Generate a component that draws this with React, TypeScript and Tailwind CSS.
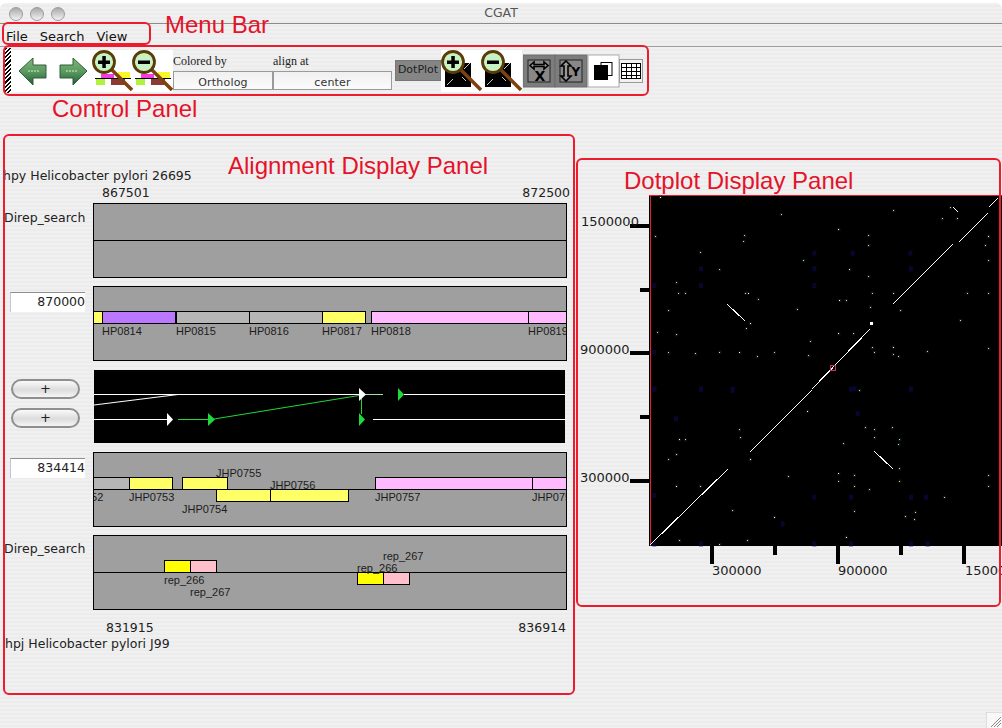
import React from "react";

const UI = "font-['DejaVu_Sans',sans-serif]";
const stripes =
  "bg-[repeating-linear-gradient(to_bottom,#f0f0f0_0px,#f0f0f0_2px,#ececec_2px,#ececec_4px)]";

type Gene = { l: number; r: number; t: number; c: string };
type Lab = { x: number; y: number; s: string };

function Track({ genes = [], labels = [], line, ny }: { genes?: Gene[]; labels?: Lab[]; line: number; ny: number }) {
  // x and y values are page coordinates of the figure; the track starts at x=93, y=ny
  return (
    <div className="relative h-[75px] w-[474px] overflow-hidden border border-black bg-[#9f9f9f] box-border">
      <div className="absolute inset-x-0 h-px bg-black" style={{ top: line - ny - 1 }} />
      {genes.map((g, i) => (
        <div
          key={i}
          className="absolute h-[13px] border border-black box-border"
          style={{ left: g.l - 94, width: g.r - g.l + 1, top: g.t - ny - 1, background: g.c }}
        />
      ))}
      {labels.map((b, i) => (
        <span
          key={i}
          className="absolute whitespace-nowrap text-[11px] leading-[13px] text-[#1c1c1c] font-['Liberation_Sans',sans-serif]"
          style={{ left: b.x - 94, top: b.y - ny - 7 }}
        >
          {b.s}
        </span>
      ))}
    </div>
  );
}

function Lens({ x, y, plus }: { x: number; y: number; plus: boolean }) {
  return (
    <g>
      <line x1={x + 7} y1={y + 7} x2={x + 28} y2={y + 28} stroke="#7a4310" strokeWidth="3.5" />
      <circle cx={x} cy={y} r="10.5" fill="#c9f2c4" stroke="#5a3c08" strokeWidth="2.8" />
      <rect x={x - 6} y={y - 1.5} width="12" height="3.5" fill="#000" />
      {plus && <rect x={x - 1.7} y={y - 6} width="3.5" height="12" fill="#000" />}
    </g>
  );
}

function MapZoom({ ox, plus }: { ox: number; plus: boolean }) {
  return (
    <g>
      <rect x={ox + 101} y="74" width="13" height="4" fill="#f23ce0" />
      <rect x={ox + 118} y="72" width="12" height="6" fill="#f7f72c" />
      <rect x={ox + 95} y="78" width="36" height="1" fill="#000" />
      <rect x={ox + 96} y="79" width="9" height="6" fill="#b0f23c" />
      <rect x={ox + 111} y="79" width="14" height="6" fill="#8a3c34" />
      <Lens x={ox + 104} y={62} plus={plus} />
    </g>
  );
}

function PlotZoom({ ox, plus }: { ox: number; plus: boolean }) {
  return (
    <g>
      <rect x={ox + 445} y="63" width="26" height="24" fill="#000" />
      <line x1={ox + 447} y1="85" x2={ox + 453} y2="79" stroke="#fff" strokeWidth="0.8" />
      <line x1={ox + 462} y1="77" x2={ox + 466} y2="81" stroke="#fff" strokeWidth="0.8" />
      <line x1={ox + 464} y1="69" x2={ox + 470} y2="63" stroke="#fff" strokeWidth="0.8" />
      <Lens x={ox + 453} y={62} plus={plus} />
    </g>
  );
}

function Toolbar() {
  return (
    <div className="flex h-[46px] items-start pl-[5px]">
      <div className="mt-px h-[45px] w-[6px] bg-[repeating-linear-gradient(135deg,#000_0px,#000_1.5px,#fff_1.5px,#fff_3px)]" />
      <svg width="162" height="42" viewBox="11 50 162 42" className="mt-[3px] block bg-white">
        <defs>
          <linearGradient id="ga" x1="0" y1="0" x2="0" y2="1">
            <stop offset="0" stopColor="#7fb87c" />
            <stop offset="0.5" stopColor="#5c9a60" />
            <stop offset="1" stopColor="#235c33" />
          </linearGradient>
        </defs>
        <polygon points="19,71 33,58 33,65 46,65 46,78 33,78 33,85" fill="url(#ga)" stroke="#2f5f38" strokeWidth="1" />
        <line x1="28" y1="71" x2="40" y2="71" stroke="#a9d6a6" strokeWidth="1.5" strokeDasharray="2 1" />
        <polygon points="87,71 73,58 73,65 60,65 60,78 73,78 73,85" fill="url(#ga)" stroke="#2f5f38" strokeWidth="1" />
        <line x1="66" y1="71" x2="78" y2="71" stroke="#a9d6a6" strokeWidth="1.5" strokeDasharray="2 1" />
        <MapZoom ox={0} plus />
        <MapZoom ox={40} plus={false} />
      </svg>
      <div className="flex flex-col">
        <div className="flex h-[24px] items-center pt-[3px] text-[12px] text-[#222] font-['Liberation_Serif',serif]">
          <span className="w-[100px]">Colored by</span>
          <span>align at</span>
        </div>
        <div className={`flex ${UI} text-[11px] tracking-[0.2px] text-[#333]`}>
          <div className="flex h-[19px] w-[100px] items-center justify-center border border-[#9a9a9a] bg-[linear-gradient(#f0f0f0,#fbfbfb)] pt-[5px]">Ortholog</div>
          <div className="flex h-[19px] w-[119px] items-center justify-center border border-[#9a9a9a] bg-[linear-gradient(#f0f0f0,#fbfbfb)] pt-[5px]">center</div>
        </div>
      </div>
      <div className={`mt-[13px] ml-[3px] flex h-[21px] w-[46px] items-center justify-center border border-[#777] bg-[#858585] text-[11px] text-[#222] ${UI}`}>DotPlot</div>
      <svg width="81" height="42" viewBox="441 50 81 42" className="mt-[3px] block bg-white">
        <PlotZoom ox={0} plus />
        <PlotZoom ox={40} plus={false} />
      </svg>
      <svg width="122" height="36" viewBox="522 54 122 36" className="mt-[7px] ml-px block">
        <rect x="522" y="55" width="32" height="32" fill="#7d7d7d" stroke="#6c6c6c" />
        <rect x="527" y="60" width="22" height="22" fill="#888" stroke="#222" />
        <path d="M529 65.5 L533 62 L533 64.5 L543 64.5 L543 62 L547 65.5 L543 69 L543 66.5 L533 66.5 L533 69 Z" fill="#999" stroke="#000" strokeWidth="1.6" />
        <text x="533.5" y="81" fontSize="14" fontWeight="bold" fontFamily="DejaVu Sans, sans-serif" fill="#000">X</text>
        <rect x="554" y="55" width="32" height="32" fill="#7d7d7d" stroke="#6c6c6c" />
        <rect x="559" y="60" width="22" height="22" fill="#888" stroke="#222" />
        <path d="M565 61 L570 66 L567 66 L567 76 L570 76 L565 81 L560 76 L563 76 L563 66 L560 66 Z" fill="#999" stroke="#000" strokeWidth="1.6" />
        <text x="570.5" y="76" fontSize="12" fontWeight="bold" fontFamily="DejaVu Sans, sans-serif" fill="#000">Y</text>
        <rect x="587" y="55" width="31" height="32" fill="#fff" stroke="#aaa" />
        <rect x="600" y="62.5" width="11" height="13" fill="#fff" stroke="#000" />
        <rect x="593" y="65" width="14" height="15" fill="#000" />
        <rect x="618.5" y="59.5" width="23" height="23" fill="#f2f2f2" stroke="#999" />
        <rect x="620.5" y="63.5" width="19" height="15" fill="#fff" stroke="#000" />
        <path d="M620 67.5H640M620 71.5H640M620 75.5H640M625.5 63V79M630.5 63V79M635.5 63V79" stroke="#000" strokeWidth="1" />
      </svg>
    </div>
  );
}

function Pill() {
  return (
    <div className="flex h-[20px] w-[69px] items-center justify-center rounded-full border-2 border-[#8f8f8f] bg-[linear-gradient(#fafafa,#dcdcdc_55%,#f5f5f5)] text-[13px] text-[#222]">+</div>
  );
}

function Num({ v }: { v: string }) {
  return (
    <div className="flex h-[20px] w-[75px] items-center justify-end border-t border-l border-t-[#8f8f8f] border-l-[#b9c7d8] bg-white text-[12.5px] text-[#222]">{v}</div>
  );
}

function Connections() {
  const W = "#ffffff";
  const G = "#1fd93a";
  return (
    <svg width="471" height="73" viewBox="94 370 471 73" className="block bg-black">
      <line x1="94" y1="394.5" x2="360" y2="394.5" stroke={W} />
      <line x1="94" y1="405" x2="178" y2="394.5" stroke={W} />
      <line x1="94" y1="419.5" x2="168" y2="419.5" stroke={W} />
      <polygon points="167,413 173,419.5 167,426" fill={W} />
      <line x1="178" y1="419.5" x2="210" y2="419.5" stroke={G} />
      <polygon points="208,413 215,419.5 208,426" fill={G} />
      <line x1="214" y1="419" x2="362" y2="395" stroke={G} />
      <line x1="362" y1="394.5" x2="383" y2="394.5" stroke="#9fe0a8" />
      <line x1="361.5" y1="395" x2="361.5" y2="414" stroke={G} />
      <polygon points="359,413 365,419.5 359,426" fill={G} />
      <polygon points="359,388 366,394.5 359,401" fill={W} />
      <polygon points="398,388 404,394.5 398,401" fill={G} />
      <line x1="404" y1="394.5" x2="565" y2="394.5" stroke={W} />
      <line x1="373" y1="419.5" x2="565" y2="419.5" stroke={W} />
    </svg>
  );
}

const z7 = (p: number[][]) => p.map(([x, y]) => [570 + x / 3, 150 + y / 3]);
const z8 = (p: number[][]) => p.map(([x, y]) => [570 + x / 3, 380 + y / 3]);

const pale = [
  ...z7([[270,140],[632,192],[970,180],[1115,205],[1160,205],[1140,172],[805,237],[895,255],[895,285],[523,255],[520,273],[255,258],[1255,258],[1245,285],[390,305],[700,330],[1255,330],[448,358],[838,358],[895,378],[318,397],[325,428],[345,428],[525,428],[533,428],[563,446],[905,428],[970,428],[1190,428],[1255,428],[808,450],[827,450],[295,480],[680,476],[900,470],[990,480],[540,520],[527,535],[905,518],[1170,510],[262,545],[318,553],[805,550],[850,550],[720,572],[295,607],[375,610],[448,605],[508,607],[560,618],[612,607],[715,616],[905,592],[912,606],[968,590],[968,612],[985,618],[1070,603],[1255,595]]),
  ...z8([[868,30],[712,92],[885,142],[913,148],[965,142],[508,148],[510,172],[327,178],[345,178],[913,172],[988,178],[985,192],[820,190],[540,237],[295,237],[318,222],[988,265],[988,302],[653,288],[805,280],[805,302],[852,285],[852,317],[1255,285],[1255,317],[318,317],[390,317],[897,328],[1122,350],[487,390],[852,392],[612,410],[1005,408],[1035,395],[1032,417],[327,480],[532,480],[827,470],[448,492]]),
];
const blue = [
  ...z7([[250,405],[390,405],[730,405],[730,308],[845,308],[1018,308],[250,605],[390,355],[730,355],[1020,355],[250,716],[390,716],[485,716],[840,716],[1020,716]]),
  ...z8([[250,25],[390,25],[485,30],[850,25],[1020,25],[860,100],[315,115],[250,345],[730,350],[840,350],[1020,350],[1065,350],[1020,490],[840,490],[730,490],[635,430],[390,490],[250,490],[1070,490]]),
];

function DotPlot() {
  const segs = [
    [650,545,728,469],[750,452,812,390],[812,389,870,329],[893,304,953,244],[959,242,988,213],[989,207,998,198],
    [727,304,745,321],[874,451,893,469],[953,207,958,212],
  ];
  const yt = [[226,630],[290,640],[353,630],[417,640],[481,630]];
  const xt = [[712,564],[775,555],[838,564],[901,555],[964,564]];
  const tx = "DejaVu Sans, sans-serif";
  return (
    <svg width="426" height="400" viewBox="576 190 426 400" className="block">
      <rect x="649" y="196" width="353" height="350" fill="#000" />
      <line x1="650.5" y1="196" x2="650.5" y2="546" stroke="#e0202c" />
      <line x1="649" y1="195.5" x2="1002" y2="195.5" stroke="#e0202c" />
      {blue.map(([x, y], i) => <rect key={i} x={x - 1} y={y - 2} width="4" height="5" fill="#06062e" />)}
      {pale.map(([x, y], i) => <rect key={i} x={x - 1} y={y - 1} width="3" height="3" fill="#101810" />)}
      {pale.map(([x, y], i) => <rect key={i} x={Math.round(x)} y={Math.round(y)} width="1" height="1" fill={i % 6 === 0 ? "#ffffff" : i % 5 === 0 ? "#8ff09f" : "#c8d8c8"} />)}
      {segs.map(([a, b, c, d], i) => <line key={i} x1={a} y1={b} x2={c} y2={d} stroke="#fff" strokeWidth="1" shapeRendering="crispEdges" />)}
      <rect x="870" y="322" width="3" height="3" fill="#fff" />
      <rect x="830.5" y="365.5" width="5" height="5" fill="none" stroke="#d0305a" />
      {yt.map(([y, x], i) => <rect key={i} x={x} y={y - 2} width={649 - x} height="4" fill="#000" />)}
      {xt.map(([x, y], i) => <rect key={i} x={x - 2} y="546" width="4" height={y - 546} fill="#000" />)}
      <g fontFamily={tx} fontSize="13" fill="#1c1c1c">
        <text x="581" y="226">1500000</text>
        <text x="580" y="354">900000</text>
        <text x="580" y="482">300000</text>
        <text x="712" y="575">300000</text>
        <text x="838" y="575">900000</text>
        <text x="965" y="575">1500000</text>
      </g>
    </svg>
  );
}

function Outline({ cls }: { cls: string }) {
  return <div className={`pointer-events-none absolute rounded-[6px] border-2 border-[#ec1c2e] ${cls}`} />;
}
function Note({ cls, children }: { cls: string; children: React.ReactNode }) {
  return (
    <span className={`pointer-events-none absolute whitespace-nowrap text-[24px] leading-[28px] text-[#e5122a] font-['Liberation_Sans',sans-serif] ${cls}`}>
      {children}
    </span>
  );
}

export default function App() {
  const purple = "#bb77ff", gray = "#b6b6b6", ly = "#ffff66", pk = "#ffb9ff";
  const light = "h-[14px] w-[14px] rounded-full border border-[#9c9c9c] bg-[linear-gradient(#a9a9a9,#f2f2f2)]";
  return (
    <div className={`relative h-[728px] w-[1002px] overflow-hidden bg-white pt-[3px] ${UI}`}>
      <div className={`flex h-[725px] flex-col rounded-t-[6px] ${stripes}`}>
        <div className="relative flex h-[21px] shrink-0 items-center justify-center border-b border-[#8c8c8c] text-[12.5px] text-[#555]">
          <div className="absolute left-[9px] top-[4px] flex gap-[7px]">
            <div className={light} />
            <div className={light} />
            <div className={light} />
          </div>
          CGAT
        </div>
        <div className="flex h-[23px] shrink-0 items-center gap-[12px] border-b border-[#a0a0a0] pl-[6px] pt-[3px] text-[13px] text-[#111]">
          <span>File</span>
          <span>Search</span>
          <span>View</span>
        </div>
        <Toolbar />
        <div className="flex flex-1">
          <div className="w-[576px] shrink-0 pt-[75px] text-[12.5px] text-[#222]">
            <div className="h-[15px] pl-[3px] leading-[15px]">hpy Helicobacter pylori 26695</div>
            <div className="mt-[2px] flex h-[15px] w-[570px] justify-between pl-[102px] leading-[15px]">
              <span>867501</span>
              <span>872500</span>
            </div>
            <div className="mt-[3px] flex">
              <div className="w-[93px] pt-[6px] pl-[4px]">Direp_search</div>
              <Track line={240} ny={203} />
            </div>
            <div className="mt-[8px] flex">
              <div className="w-[93px] pt-[6px] pl-[10px]"><Num v="870000" /></div>
              <Track
                line={323}
                ny={286}
                genes={[
                  { l: 93, r: 102, t: 311, c: ly },
                  { l: 102, r: 175, t: 311, c: purple },
                  { l: 176, r: 249, t: 311, c: gray },
                  { l: 249, r: 322, t: 311, c: gray },
                  { l: 322, r: 365, t: 311, c: ly },
                  { l: 371, r: 528, t: 311, c: pk },
                  { l: 528, r: 570, t: 311, c: pk },
                ]}
                labels={[
                  { x: 102, y: 331, s: "HP0814" },
                  { x: 176, y: 331, s: "HP0815" },
                  { x: 249, y: 331, s: "HP0816" },
                  { x: 322, y: 331, s: "HP0817" },
                  { x: 371, y: 331, s: "HP0818" },
                  { x: 528, y: 331, s: "HP0819" },
                ]}
              />
            </div>
            <div className="mt-[9px] flex">
              <div className="flex w-[94px] flex-col gap-[9px] pt-[9px] pl-[11px]">
                <Pill />
                <Pill />
              </div>
              <Connections />
            </div>
            <div className="mt-[9px] flex">
              <div className="w-[93px] pt-[6px] pl-[10px]"><Num v="834414" /></div>
              <Track
                line={489}
                ny={452}
                genes={[
                  { l: 93, r: 129, t: 477, c: gray },
                  { l: 129, r: 172, t: 477, c: ly },
                  { l: 182, r: 227, t: 477, c: ly },
                  { l: 375, r: 532, t: 477, c: pk },
                  { l: 532, r: 570, t: 477, c: pk },
                  { l: 216, r: 270, t: 489, c: ly },
                  { l: 270, r: 348, t: 489, c: ly },
                ]}
                labels={[
                  { x: 58, y: 497, s: "JHP0752" },
                  { x: 129, y: 497, s: "JHP0753" },
                  { x: 182, y: 509, s: "JHP0754" },
                  { x: 216, y: 473, s: "JHP0755" },
                  { x: 270, y: 485, s: "JHP0756" },
                  { x: 375, y: 497, s: "JHP0757" },
                  { x: 532, y: 497, s: "JHP0758" },
                ]}
              />
            </div>
            <div className="mt-[8px] flex">
              <div className="w-[93px] pt-[5px] pl-[4px]">Direp_search</div>
              <Track
                line={572}
                ny={535}
                genes={[
                  { l: 164, r: 190, t: 560, c: "#ffff00" },
                  { l: 190, r: 216, t: 560, c: "#ffc0cb" },
                  { l: 357, r: 383, t: 572, c: "#ffff00" },
                  { l: 383, r: 409, t: 572, c: "#ffc0cb" },
                ]}
                labels={[
                  { x: 164, y: 580, s: "rep_266" },
                  { x: 190, y: 592, s: "rep_267" },
                  { x: 357, y: 568, s: "rep_266" },
                  { x: 383, y: 556, s: "rep_267" },
                ]}
              />
            </div>
            <div className="mt-[10px] flex h-[15px] w-[566px] justify-between pl-[106px] leading-[15px]">
              <span>831915</span>
              <span>836914</span>
            </div>
            <div className="mt-px h-[15px] pl-[5px] leading-[15px]">hpj Helicobacter pylori J99</div>
          </div>
          <div className="pt-[97px]">
            <DotPlot />
          </div>
        </div>
      </div>
      <svg width="16" height="16" viewBox="0 0 16 16" className="absolute right-0 bottom-0 block bg-[#f8f8f8]">
        <path d="M0 0H16M0 0V16" stroke="#c4c4c4" fill="none" />
        <path d="M5 15L15 5M8 15L15 8M11 15L15 11" stroke="#8a8a8a" fill="none" />
      </svg>
      <Outline cls="left-[2px] top-[22px] h-[23px] w-[149px]" />
      <Outline cls="left-[3px] top-[45px] h-[51px] w-[646px]" />
      <Outline cls="left-[3px] top-[134px] h-[561px] w-[572px]" />
      <Outline cls="left-[576px] top-[158px] h-[449px] w-[425px]" />
      <Note cls="left-[165px] top-[11px]">Menu Bar</Note>
      <Note cls="left-[52px] top-[95px]">Control Panel</Note>
      <Note cls="left-[228px] top-[152px]">Alignment Display Panel</Note>
      <Note cls="left-[624px] top-[167px]">Dotplot Display Panel</Note>
    </div>
  );
}
